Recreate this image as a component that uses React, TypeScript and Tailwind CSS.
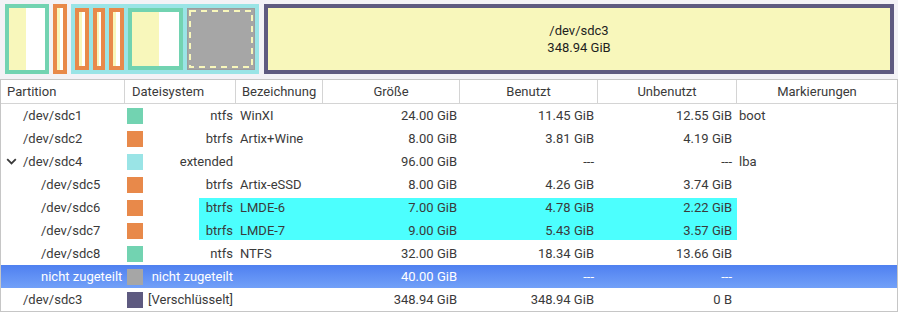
import React from "react";

const Y = "#f8f7bb";

function Part({ w, border, yellow, extra = "" }: { w: number; border: string; yellow: number; extra?: string }) {
  return (
    <div className={`h-full box-border border-4 flex ${extra}`} style={{ width: w, borderColor: border }}>
      <div className="h-full" style={{ width: yellow, background: Y }} />
      <div className="h-full flex-1 bg-white" />
    </div>
  );
}

type Row = {
  name: string;
  level: 0 | 1 | 2;
  chevron?: boolean;
  color: string;
  fs: string;
  label: string;
  size: string;
  used: string;
  unused: string;
  flags: string;
  selected?: boolean;
};

const rows: Row[] = [
  { name: "/dev/sdc1", level: 1, color: "#72d3b1", fs: "ntfs", label: "WinXI", size: "24.00 GiB", used: "11.45 GiB", unused: "12.55 GiB", flags: "boot" },
  { name: "/dev/sdc2", level: 1, color: "#e8894a", fs: "btrfs", label: "Artix+Wine", size: "8.00 GiB", used: "3.81 GiB", unused: "4.19 GiB", flags: "" },
  { name: "/dev/sdc4", level: 1, chevron: true, color: "#9ae4e6", fs: "extended", label: "", size: "96.00 GiB", used: "---", unused: "---", flags: "lba" },
  { name: "/dev/sdc5", level: 2, color: "#e8894a", fs: "btrfs", label: "Artix-eSSD", size: "8.00 GiB", used: "4.26 GiB", unused: "3.74 GiB", flags: "" },
  { name: "/dev/sdc6", level: 2, color: "#e8894a", fs: "btrfs", label: "LMDE-6", size: "7.00 GiB", used: "4.78 GiB", unused: "2.22 GiB", flags: "" },
  { name: "/dev/sdc7", level: 2, color: "#e8894a", fs: "btrfs", label: "LMDE-7", size: "9.00 GiB", used: "5.43 GiB", unused: "3.57 GiB", flags: "" },
  { name: "/dev/sdc8", level: 2, color: "#72d3b1", fs: "ntfs", label: "NTFS", size: "32.00 GiB", used: "18.34 GiB", unused: "13.66 GiB", flags: "" },
  { name: "nicht zugeteilt", level: 2, color: "#a6a6a6", fs: "nicht zugeteilt", label: "", size: "40.00 GiB", used: "---", unused: "---", flags: "", selected: true },
  { name: "/dev/sdc3", level: 1, color: "#5e5a80", fs: "[Verschlüsselt]", label: "", size: "348.94 GiB", used: "348.94 GiB", unused: "0 B", flags: "" },
];

export default function App() {
  return (
    <div
      className="w-[898px] h-[312px] overflow-hidden bg-[#f3f2f6] text-[13px] leading-none"
      style={{ fontFamily: "Roboto, 'Liberation Sans', sans-serif" }}
    >
      {/* disk map */}
      <div className="h-[79px] pt-[4px] pl-[5px] flex">
        <div className="h-[70px] flex">
          <Part w={44} border="#72d3b1" yellow={17} />
          <div className="w-[4px]" />
          <Part w={14} border="#e8894a" yellow={3} />
          <div className="w-[4px]" />
          <div className="w-[188px] h-full bg-[#9ae4e6] p-[4px] flex gap-[4px]">
            <Part w={14} border="#e8894a" yellow={3} />
            <Part w={12} border="#e8894a" yellow={2} />
            <Part w={15} border="#e8894a" yellow={3} />
            <Part w={55} border="#72d3b1" yellow={27} />
            <div className="w-[68px] h-full relative bg-[#a6a6a6] border border-[#9c9c9c] box-border">
              <svg className="absolute inset-0" width="66" height="60" viewBox="0 0 66 60">
                <rect x="2" y="2" width="62" height="56" fill="none" stroke="#f8f7bb" strokeWidth="2" strokeDasharray="6 5" />
              </svg>
            </div>
          </div>
          <div className="w-[5px]" />
          <div className="w-[630px] h-full box-border border-4 border-[#5e5a80] bg-[#f8f7bb] flex flex-col items-center justify-center gap-[3px] text-[#1e1e1e] text-[13px] leading-[14px]">
            <div>/dev/sdc3</div>
            <div>348.94 GiB</div>
          </div>
        </div>
      </div>

      {/* table */}
      <div className="h-[233px] bg-white border border-[#c6c6c6] box-border text-[#3a3a3a] relative">
        {/* header */}
        <div className="h-[24px] flex border-b border-[#d4d4d4] box-border">
          <div className="w-[124px] border-r border-[#d4d4d4] flex items-center pl-[6px]">Partition</div>
          <div className="w-[111px] border-r border-[#d4d4d4] flex items-center pl-[7px]">Dateisystem</div>
          <div className="w-[87px] border-r border-[#d4d4d4] flex items-center pl-[6px] whitespace-nowrap">Bezeichnung</div>
          <div className="w-[137px] border-r border-[#d4d4d4] flex items-center justify-center">Größe</div>
          <div className="w-[138px] border-r border-[#d4d4d4] flex items-center justify-center">Benutzt</div>
          <div className="w-[139px] border-r border-[#d4d4d4] flex items-center justify-center">Unbenutzt</div>
          <div className="w-[160px] flex items-center justify-center">Markierungen</div>
        </div>

        {/* cyan highlight annotation */}
        <div className="absolute left-[198px] top-[118px] w-[538px] h-[42px] bg-[#4cfffe]" />

        <div className="relative">
          {rows.map((r) => (
            <div
              key={r.name}
              className={`h-[23px] flex items-center ${r.selected ? "bg-gradient-to-b from-[#4f80f0] to-[#72a0f8] text-white" : ""}`}
            >
              <div className="w-[124px] h-full flex items-center relative">
                {r.chevron && (
                  <svg className="absolute left-[5px] top-[8px]" width="11" height="7" viewBox="0 0 11 7">
                    <polyline points="1.2,1.2 5.5,5.5 9.8,1.2" fill="none" stroke="#3a3a3a" strokeWidth="1.8" />
                  </svg>
                )}
                <span className={r.level === 2 ? "pl-[40px]" : "pl-[22px]"}>{r.name}</span>
              </div>
              <div className="w-[111px] h-full flex items-center pl-[2px] pr-[3px]">
                <div className="w-[16px] h-[16px] shrink-0" style={{ background: r.color }} />
                <span className="flex-1 text-right whitespace-nowrap">{r.fs}</span>
              </div>
              <div className="w-[87px] h-full flex items-center pl-[4px] whitespace-nowrap">{r.label}</div>
              <div className="w-[137px] h-full flex items-center justify-end pr-[3px]">{r.size}</div>
              <div className="w-[138px] h-full flex items-center justify-end pr-[4px]">{r.used}</div>
              <div className="w-[139px] h-full flex items-center justify-end pr-[5px]">{r.unused}</div>
              <div className="w-[160px] h-full flex items-center pl-[2px]">{r.flags}</div>
            </div>
          ))}
        </div>
      </div>
    </div>
  );
}
